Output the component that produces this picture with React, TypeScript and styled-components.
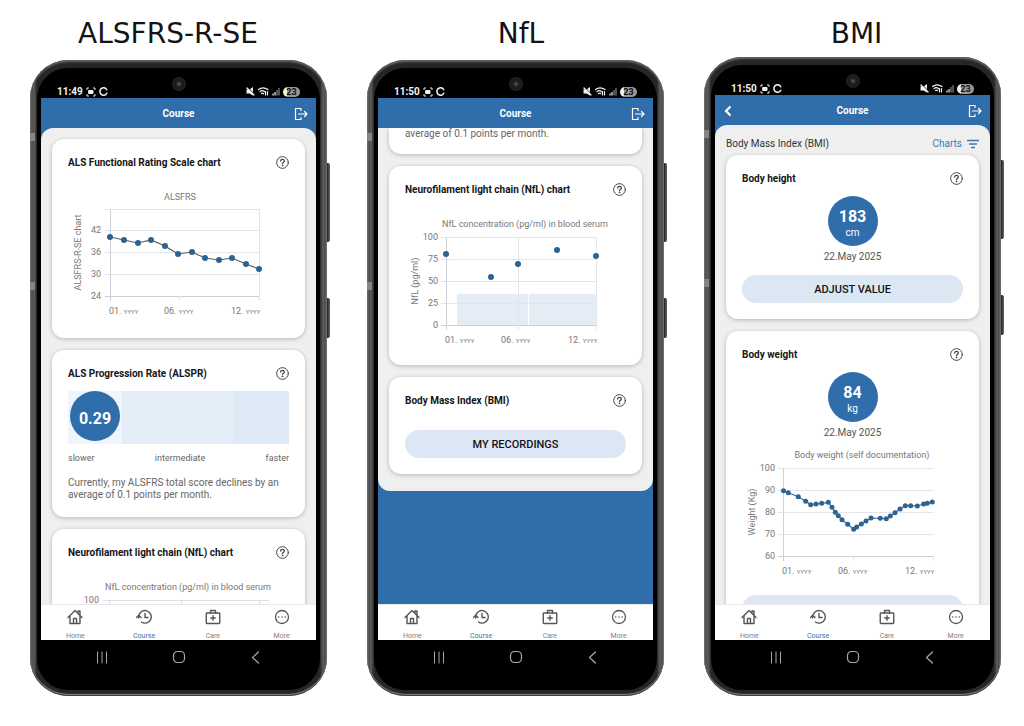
import React from "react";
import styled, { createGlobalStyle, css } from "styled-components";

const blue = "#2f6dab";
const ink = "#141416";

const GlobalStyle = createGlobalStyle`
  *, *::before, *::after { box-sizing: border-box; }
  body {
    margin: 0;
    background: #fff;
    color: ${ink};
    font-family: Roboto, "Liberation Sans", sans-serif;
  }
  h1, h2, h3, p, ul { margin: 0; padding: 0; }
  button { font: inherit; color: inherit; border: 0; padding: 0; background: none; cursor: pointer; }
  svg { display: block; flex: none; }
`;

const Page = styled.main`
  min-width: 960px;
  padding-bottom: 30px;
`;

const Titles = styled.header`
  display: grid;
  grid-template-columns: 336fr 370fr 301fr;
  padding: 17px 17px 0 0;
`;

const Title = styled.h1`
  text-align: center;
  font: 400 28px/34px "DejaVu Sans", sans-serif;
`;

const Phones = styled.div`
  display: grid;
  grid-template-columns: repeat(3, 1fr);
  align-items: end;
  gap: 40px;
  padding: 6px 23px 0 30px;
`;

const Phone = styled.section<{ $tall?: boolean }>`
  position: relative;
  display: flex;
  height: ${(p) => (p.$tall ? 639 : 636)}px;
  padding: 8px 7px 6px;
  border-radius: 38px;
  background: linear-gradient(90deg, #77797a 0, #4c4c4d 2px, #5d5d5e 4px, #262627 7px, #262627 calc(100% - 7px), #5d5d5e calc(100% - 4px), #4c4c4d calc(100% - 2px), #77797a 100%);
  box-shadow: inset 0 2px 2px #666, inset 0 -1px 1px #3a3a3a, inset 0 -2px 1px #8c8c8c;
`;

const SideKey = styled.span<{ $top: number; $size: number }>`
  position: absolute;
  left: 100%;
  top: ${(p) => p.$top}px;
  width: 3px;
  height: ${(p) => p.$size}px;
  border-radius: 0 2px 2px 0;
  background: linear-gradient(90deg, #222, #666);
`;

const Antenna = styled.span<{ $top: number }>`
  position: absolute;
  left: 0;
  top: ${(p) => p.$top}px;
  width: 5px;
  height: 8px;
  background: #858585;
`;

const Glass = styled.div`
  flex: 1;
  min-width: 0;
  display: flex;
  flex-direction: column;
  padding: 0 4px;
  border-radius: 31px;
  background: #000;
`;

const StatusBar = styled.div`
  display: grid;
  grid-template-columns: 1fr auto 1fr;
  height: 30px;
  padding: 0 16px;
  color: #f2f2f2;
  font-size: 10px;
  line-height: 12px;
  font-weight: 700;
`;

const StatusGroup = styled.div<{ $end?: boolean }>`
  display: flex;
  align-items: center;
  align-self: end;
  gap: 3px;
  height: 13px;
  justify-content: ${(p) => (p.$end ? "flex-end" : "flex-start")};
`;

const Camera = styled.span`
  width: 14px;
  height: 14px;
  margin-top: 9px;
  border-radius: 50%;
  background: radial-gradient(circle, #666 0, #2c2c2d 2px, #19191a 4px, #222223 7px);
`;

const Battery = styled.span`
  width: 17px;
  border-radius: 5px;
  background: linear-gradient(90deg, #f0f0f0 4px, #979797 4px);
  color: #111;
  font-size: 9px;
  line-height: 10px;
  text-align: center;
`;

const Screen = styled.div`
  flex: 1;
  min-height: 0;
  display: flex;
  flex-direction: column;
  background: ${blue};
`;

const AppBar = styled.header`
  display: grid;
  grid-template-columns: 1fr auto 1fr;
  align-items: center;
  flex: none;
  height: 30px;
  padding: 1px 8px 0;
  color: #fff;
`;

const AppTitle = styled.h2`
  grid-column: 2;
  padding-top: 1px;
  font-size: 10px;
  line-height: 14px;
  font-weight: 700;
`;

const BarButton = styled.button<{ $end?: boolean }>`
  grid-row: 1;
  grid-column: ${(p) => (p.$end ? 3 : 1)};
  justify-self: ${(p) => (p.$end ? "end" : "start")};
`;

const Viewport = styled.div`
  flex: 1;
  min-height: 0;
  overflow: hidden;
`;

const Sheet = styled.div<{ $scrolled?: boolean }>`
  display: flex;
  flex-direction: column;
  gap: 12px;
  padding: ${(p) => (p.$scrolled ? "0 11px 17px" : "11px 11px 17px")};
  border-radius: ${(p) => (p.$scrolled ? "0 0 12px 12px" : "12px")};
  background: #efefef;
`;

const Card = styled.article<{ $tail?: boolean }>`
  display: flex;
  flex-direction: column;
  padding: 16px;
  border-radius: 12px;
  background: #fff;
  box-shadow: 0 1px 4px rgba(0, 0, 0, 0.24);
  ${(p) =>
    p.$tail &&
    css`
      padding: 0 16px 14px;
      border-radius: 0 0 12px 12px;
    `}
`;

const CardHead = styled.div`
  display: flex;
  align-items: center;
  justify-content: space-between;
  height: 14px;
`;

const CardTitle = styled.h3`
  padding-top: 2px;
  font-size: 10px;
  line-height: 14px;
  font-weight: 700;
`;

const HelpButton = styled.button`
  color: #444;
`;

const ChartBox = styled.svg<{ $below?: boolean }>`
  width: 100%;
  height: auto;
  margin-top: ${(p) => (p.$below ? 3 : 16)}px;
  font-family: Roboto, sans-serif;
  font-size: 9px;
  fill: #777;
`;

const RateBar = styled.div`
  display: flex;
  height: 53px;
  margin-top: 11px;
  padding-left: 2px;
  background: linear-gradient(90deg, #eff5fb 54px, #e3edf7 54px, #e3edf7 75%, #dde9f4 75%);
`;

const Bubble = styled.div`
  display: flex;
  flex-direction: column;
  align-items: center;
  justify-content: center;
  flex: none;
  width: 50px;
  height: 50px;
  padding-top: 6px;
  border-radius: 50%;
  background: ${blue};
  color: #fff;
  font-size: 16px;
  line-height: 18px;
  font-weight: 700;
`;

const Unit = styled.span`
  font-size: 10px;
  line-height: 14px;
  font-weight: 400;
`;

const Scale = styled.div`
  display: flex;
  justify-content: space-between;
  margin-top: 7px;
  color: #666;
  font-size: 9px;
  line-height: 14px;
`;

const Note = styled.p<{ $spaced?: boolean }>`
  margin-top: ${(p) => (p.$spaced ? 12 : 0)}px;
  color: #666;
  font-size: 10px;
  line-height: 12px;
`;

const Reading = styled.div`
  display: flex;
  flex-direction: column;
  align-items: center;
  gap: 4px;
  margin-top: 11px;
  color: #555;
  font-size: 10px;
  line-height: 14px;
`;

const PillButton = styled.button<{ $gap: number; $tone?: string }>`
  height: 28px;
  margin-top: ${(p) => p.$gap}px;
  padding-top: 2px;
  border-radius: 14px;
  background: ${(p) => p.$tone || "#dde6f5"};
  font-size: 11px;
  line-height: 14px;
  font-weight: 500;
`;

const Group = styled.div`
  display: flex;
  flex-direction: column;
  gap: 3px;
`;

const ListHead = styled.div`
  display: flex;
  align-items: center;
  justify-content: space-between;
  height: 16px;
  color: #333;
  font-size: 10px;
  line-height: 16px;
`;

const FilterButton = styled.button`
  display: flex;
  align-items: center;
  gap: 5px;
  color: #3878b4;
`;

const TabBar = styled.nav`
  display: grid;
  grid-template-columns: repeat(4, 1fr);
  flex: none;
  height: 36px;
  background: #fff;
  border-top: 1px solid #e8e8e8;
`;

const Tab = styled.a`
  display: flex;
  flex-direction: column;
  align-items: center;
  gap: 7px;
  padding-top: 4px;
  color: #555;
  text-decoration: none;
`;

const TabLabel = styled.span<{ $active?: boolean }>`
  color: ${(p) => (p.$active ? "#2f75b0" : "#808080")};
  font-size: 7px;
  line-height: 8px;
`;

const SystemNav = styled.div`
  display: flex;
  justify-content: center;
  gap: 63px;
  height: 50px;
  padding-top: 10px;
  color: #a8a8a8;
`;

const SystemKey = styled.button`
  height: 14px;
`;

const stroke = { fill: "none", stroke: "currentColor", strokeLinecap: "round", strokeLinejoin: "round" } as const;

const HelpIcon = () => (
  <svg width="13" height="13" viewBox="0 0 26 26" {...stroke} strokeWidth="2">
    <circle cx="13" cy="13" r="11.7" />
    <path d="M9.4 10.2c0-2.2 1.5-3.6 3.6-3.6s3.7 1.3 3.7 3.3c0 2.7-3.7 2.8-3.7 5.6" strokeWidth="2.6" />
    <circle cx="13" cy="19" r="1" fill="currentColor" strokeWidth="1.2" />
  </svg>
);

const LogoutIcon = () => (
  <svg width="14" height="14" viewBox="0 0 28 28" {...stroke} strokeWidth="2.4">
    <path d="M14 7V3H3v22h11v-4M9 14h17M21 9l5 5-5 5" />
  </svg>
);

const BackIcon = () => (
  <svg width="10" height="12" viewBox="0 0 20 24" {...stroke} strokeWidth="4.4" strokeLinecap="butt" strokeLinejoin="miter">
    <path d="M15 3 6 12l9 9" />
  </svg>
);

const FilterIcon = () => (
  <svg width="12" height="10" viewBox="0 0 24 20" {...stroke} strokeWidth="2.6">
    <path d="M1 3h22M5 10h14M9 17h6" />
  </svg>
);

const HomeIcon = () => (
  <svg width="16" height="16" viewBox="0 0 32 32" {...stroke} strokeWidth="2.8">
    <path d="M2 17 16 3l14 14M6 14v15h20V14M22 8V4h4v8M13 29V19h6v10" />
  </svg>
);

const CourseIcon = () => (
  <svg width="16" height="16" viewBox="0 0 32 32" {...stroke} strokeWidth="2.8">
    <path d="M5.500 18V16A12.500 12.500 0 1 1 11 26M1 17l4.500-4.500L10 17M18 9v8h6" />
  </svg>
);

const CareIcon = () => (
  <svg width="16" height="16" viewBox="0 0 32 32" {...stroke} strokeWidth="2.8">
    <rect x="2.500" y="8" width="27" height="21" rx="1.500" />
    <path d="M11 8V3h10v5M16 13.500v9M11.500 18h9" />
  </svg>
);

const MoreIcon = () => (
  <svg width="16" height="16" viewBox="0 0 32 32" {...stroke} strokeWidth="2.6">
    <circle cx="16" cy="16" r="13" />
    <path d="M9.500 16h.1M16 16h.1M22.500 16h.1" strokeWidth="3" />
  </svg>
);

const CaptureIcon = () => (
  <svg width="10" height="10" viewBox="0 0 20 20" {...stroke} strokeWidth="2">
    <path d="M2 5V2h3M15 2h3v3M18 15v3h-3M5 18H2v-3" />
    <rect x="6" y="7" width="8" height="6" fill="currentColor" />
  </svg>
);

const RingIcon = () => (
  <svg width="9" height="9" viewBox="0 0 18 18" {...stroke} strokeWidth="3">
    <path d="M15.500 5.500A7.200 7.200 0 0 0 2 7v4a7.200 7.200 0 0 0 13.500 1.500" />
  </svg>
);

const MuteIcon = () => (
  <svg width="9" height="9" viewBox="0 0 18 18" {...stroke} strokeWidth="2.4">
    <path d="M1 5h6l7-5v17l-7-4H1z" fill="currentColor" stroke="none" />
    <path d="M4 1l13 14" stroke="#000" strokeWidth="2" />
    <path d="M2 2l14 14" />
  </svg>
);

const WifiIcon = () => (
  <svg width="11" height="9" viewBox="0 0 22 18" {...stroke} strokeWidth="2.4">
    <path d="M1 5c5-4 13-4 19 0M4 9c3-2.500 6-2.500 9 0M7 13c1.500-1 3-1 4 0M15 9v7M19 9v7" />
  </svg>
);

const SignalIcon = () => (
  <svg width="8" height="9" viewBox="0 0 16 18" {...stroke} strokeWidth="2.4" strokeLinecap="butt">
    <path d="M2 17v-4M6 17v-7" />
    <path d="M10 17V6M14 17V2" opacity="0.55" />
  </svg>
);

type ChartProps = {
  title: string;
  titleX?: number;
  axis: string;
  ticks: number[];
  left?: number;
  top: number;
  firstTick?: number;
  bottom: number;
  points: [number, number][];
  line?: string;
  columns?: boolean;
  bands?: [number, number][];
  dot?: number;
  below?: boolean;
};

const RIGHT = 191;
const MIDDLE = 111;

function Chart({
  title, titleX = 120, axis, ticks, left = 41, top, firstTick = top, bottom,
  points, line, columns, bands = [], dot = 3, below,
}: ChartProps) {
  const step = (bottom - firstTick) / (ticks.length - 1);
  const rows = ticks.map((value, i) => ({ value, y: Math.round(firstTick + i * step) }));
  const dates = [
    { month: "01.", x: left - 1 },
    { month: "06.", x: 96 },
    { month: "12.", x: 163 },
  ];
  return (
    <ChartBox viewBox="0 0 221 137" role="img" aria-label={title} $below={below}>
      <text x={titleX} y="15" textAnchor="middle">{title}</text>
      <text transform={`translate(13 ${(top + bottom) / 2}) rotate(-90)`} textAnchor="middle">{axis}</text>
      {bands.map(([from, to]) => (
        <rect key={from} x={from} y="82" width={to - from} height={bottom - 82} fill="#e4ecf5" />
      ))}
      <g stroke="#e2e6ec" strokeWidth="1" shapeRendering="crispEdges">
        {top !== firstTick && <line x1={left - 5} x2={RIGHT} y1={top} y2={top} />}
        {rows.map((r) => (
          <line key={r.value} x1={left - 5} x2={RIGHT} y1={r.y} y2={r.y} />
        ))}
        <line x1={left} x2={left} y1={top} y2={bottom + 5} stroke="#cdd0d6" />
        <line x1={left - 5} x2={RIGHT} y1={bottom} y2={bottom} stroke="#cdd0d6" />
        <line x1={MIDDLE + (columns ? 2 : 0)} x2={MIDDLE + (columns ? 2 : 0)} y1={columns ? top : bottom} y2={bottom + 5} />
        <line x1={RIGHT} x2={RIGHT} y1={below ? bottom : top} y2={bottom + 5} />
      </g>
      {rows.map((r) => (
        <text key={r.value} x="33" y={r.y + 3} textAnchor="end">{r.value}</text>
      ))}
      {line && (
        <polyline points={points.map((p) => p.join(",")).join(" ")} fill="none" stroke={line} strokeWidth="1.2" />
      )}
      {points.map(([x, y]) => (
        <circle key={x} cx={x} cy={y} r={dot} fill="#2d6390" />
      ))}
      {dates.map((d) => (
        <text key={d.month} x={d.x} y={bottom + 18}>
          {d.month} <tspan fontSize="6">YYYY</tspan>
        </text>
      ))}
    </ChartBox>
  );
}

/* Top strip of a chart whose body lies below the fold. */
const ChartPeek = ({ title, max }: { title: string; max: number }) => (
  <ChartBox viewBox="0 0 221 30" role="img" aria-label={title}>
    <text x="120" y="15" textAnchor="middle">{title}</text>
    <text x="31" y="28" textAnchor="end">{max}</text>
    <g stroke="#dcdfe4" shapeRendering="crispEdges">
      <line x1="35" x2="201" y1="25" y2="25" />
      <line x1="41" x2="41" y1="25" y2="30" />
      <line x1="113" x2="113" y1="25" y2="30" />
      <line x1="191" x2="191" y1="25" y2="30" />
    </g>
  </ChartBox>
);

const ratingPoints: [number, number][] = [
  [42, 52], [56, 55], [70, 58], [83, 55], [97, 61], [110, 69],
  [124, 67], [137, 73], [151, 75], [164, 73], [178, 79], [191, 84],
];

const nflPoints: [number, number][] = [[41, 42], [86, 65], [113, 52], [152, 38], [191, 44]];

const weightPoints: [number, number][] = [
  [41.5, 47.7], [46.3, 49.7], [56.3, 53.7], [63.7, 58.3], [68.7, 61.7], [74, 61], [79.7, 60.3],
  [86.3, 59.3], [90, 64.3], [93.3, 69.3], [96.3, 72.7], [100, 76.7], [105.7, 81.3], [111.7, 86.3],
  [114.7, 84], [119.3, 81], [124, 78], [129, 75], [138.3, 75.3], [144.3, 75.7], [148.3, 73],
  [153, 69.7], [158, 66], [163.3, 62.7], [168.7, 62.7], [175.3, 63], [181.7, 61], [185.3, 60.3], [190.3, 59],
];

const Head = ({ title }: { title: string }) => (
  <CardHead>
    <CardTitle>{title}</CardTitle>
    <HelpButton type="button" aria-label={`About ${title}`}><HelpIcon /></HelpButton>
  </CardHead>
);

const nflHeading = "Neurofilament light chain (NfL) chart";
const nflCaption = "NfL concentration (pg/ml) in blood serum";

const tabs = [
  { label: "Home", Icon: HomeIcon },
  { label: "Course", Icon: CourseIcon },
  { label: "Care", Icon: CareIcon },
  { label: "More", Icon: MoreIcon },
];

type DeviceProps = { name: string; time: string; back?: boolean; tall?: boolean; children: React.ReactNode };

function Device({ name, time, back, tall, children }: DeviceProps) {
  return (
    <Phone $tall={tall} aria-label={name}>
      <Antenna $top={73} />
      <Antenna $top={222} />
      <SideKey $top={103} $size={79} />
      <SideKey $top={238} $size={40} />
      <Glass>
        <StatusBar>
          <StatusGroup>
            {time}
            <CaptureIcon />
            <RingIcon />
          </StatusGroup>
          <Camera />
          <StatusGroup $end>
            <MuteIcon />
            <WifiIcon />
            <SignalIcon />
            <Battery>23</Battery>
          </StatusGroup>
        </StatusBar>
        <Screen>
          <AppBar>
            {back && <BarButton type="button" aria-label="Back"><BackIcon /></BarButton>}
            <AppTitle>Course</AppTitle>
            <BarButton $end type="button" aria-label="Log out"><LogoutIcon /></BarButton>
          </AppBar>
          <Viewport>{children}</Viewport>
          <TabBar>
            {tabs.map(({ label, Icon }) => (
              <Tab key={label} href="#">
                <Icon />
                <TabLabel $active={label === "Course"}>{label}</TabLabel>
              </Tab>
            ))}
          </TabBar>
        </Screen>
        <SystemNav>
          <SystemKey type="button" aria-label="Recent apps">
            <svg width="14" height="14" viewBox="0 0 14 14" {...stroke}><path d="M2.500 2v11M7 2v11M11.500 2v11" /></svg>
          </SystemKey>
          <SystemKey type="button" aria-label="Home screen">
            <svg width="14" height="14" viewBox="0 0 14 14" {...stroke} strokeWidth="1.200"><rect x="1.500" y="1.500" width="11" height="11" rx="4" /></svg>
          </SystemKey>
          <SystemKey type="button" aria-label="Go back">
            <svg width="14" height="14" viewBox="0 0 14 14" {...stroke} strokeWidth="1.200"><path d="M9.500 2 3.500 7.500l6 5.500" /></svg>
          </SystemKey>
        </SystemNav>
      </Glass>
    </Phone>
  );
}

export default function App() {
  return (
    <Page>
      <GlobalStyle />
      <Titles>
        <Title>ALSFRS-R-SE</Title>
        <Title>NfL</Title>
        <Title>BMI</Title>
      </Titles>
      <Phones>
        <Device name="ALSFRS-R-SE" time="11:49">
          <Sheet>
            <Card>
              <Head title="ALS Functional Rating Scale chart" />
              <Chart
                title="ALSFRS"
                titleX={112}
                axis="ALSFRS-R-SE chart"
                ticks={[42, 36, 30, 24]}
                left={42}
                top={24}
                firstTick={45}
                bottom={111}
                points={ratingPoints}
                line="#555f6b"
              />
            </Card>
            <Card>
              <Head title="ALS Progression Rate (ALSPR)" />
              <RateBar><Bubble>0.29</Bubble></RateBar>
              <Scale>
                <span>slower</span>
                <span>intermediate</span>
                <span>faster</span>
              </Scale>
              <Note $spaced>Currently, my ALSFRS total score declines by an average of 0.1 points per month.</Note>
            </Card>
            <Card>
              <Head title={nflHeading} />
              <ChartPeek title={nflCaption} max={100} />
            </Card>
          </Sheet>
        </Device>

        <Device name="NfL" time="11:50">
          <Sheet $scrolled>
            <Card $tail>
              <Note>average of 0.1 points per month.</Note>
            </Card>
            <Card>
              <Head title={nflHeading} />
              <Chart
                title={nflCaption}
                axis="NfL (pg/ml)"
                ticks={[100, 75, 50, 25, 0]}
                top={25}
                bottom={113}
                points={nflPoints}
                bands={[[52, 123], [124, 191]]}
                columns
              />
            </Card>
            <Card>
              <Head title="Body Mass Index (BMI)" />
              <PillButton type="button" $gap={23}>MY RECORDINGS</PillButton>
            </Card>
          </Sheet>
        </Device>

        <Device name="BMI" time="11:50" back tall>
          <Sheet>
            <Group>
              <ListHead>
                Body Mass Index (BMI)
                <FilterButton type="button">Charts <FilterIcon /></FilterButton>
              </ListHead>
              <Card>
                <Head title="Body height" />
                <Reading>
                  <Bubble>183<Unit>cm</Unit></Bubble>
                  22.May 2025
                </Reading>
                <PillButton type="button" $gap={11} $tone="#dbe7f2">ADJUST VALUE</PillButton>
              </Card>
            </Group>
            <Card>
              <Head title="Body weight" />
              <Reading>
                <Bubble>84<Unit>kg</Unit></Bubble>
                22.May 2025
              </Reading>
              <Chart
                title="Body weight (self documentation)"
                axis="Weight (Kg)"
                ticks={[100, 90, 80, 70, 60]}
                top={25}
                bottom={113}
                points={weightPoints}
                line="#2f6dab"
                dot={2.5}
                below
              />
              <PillButton type="button" $gap={15} aria-label="Adjust weight" />
            </Card>
          </Sheet>
        </Device>
      </Phones>
    </Page>
  );
}
